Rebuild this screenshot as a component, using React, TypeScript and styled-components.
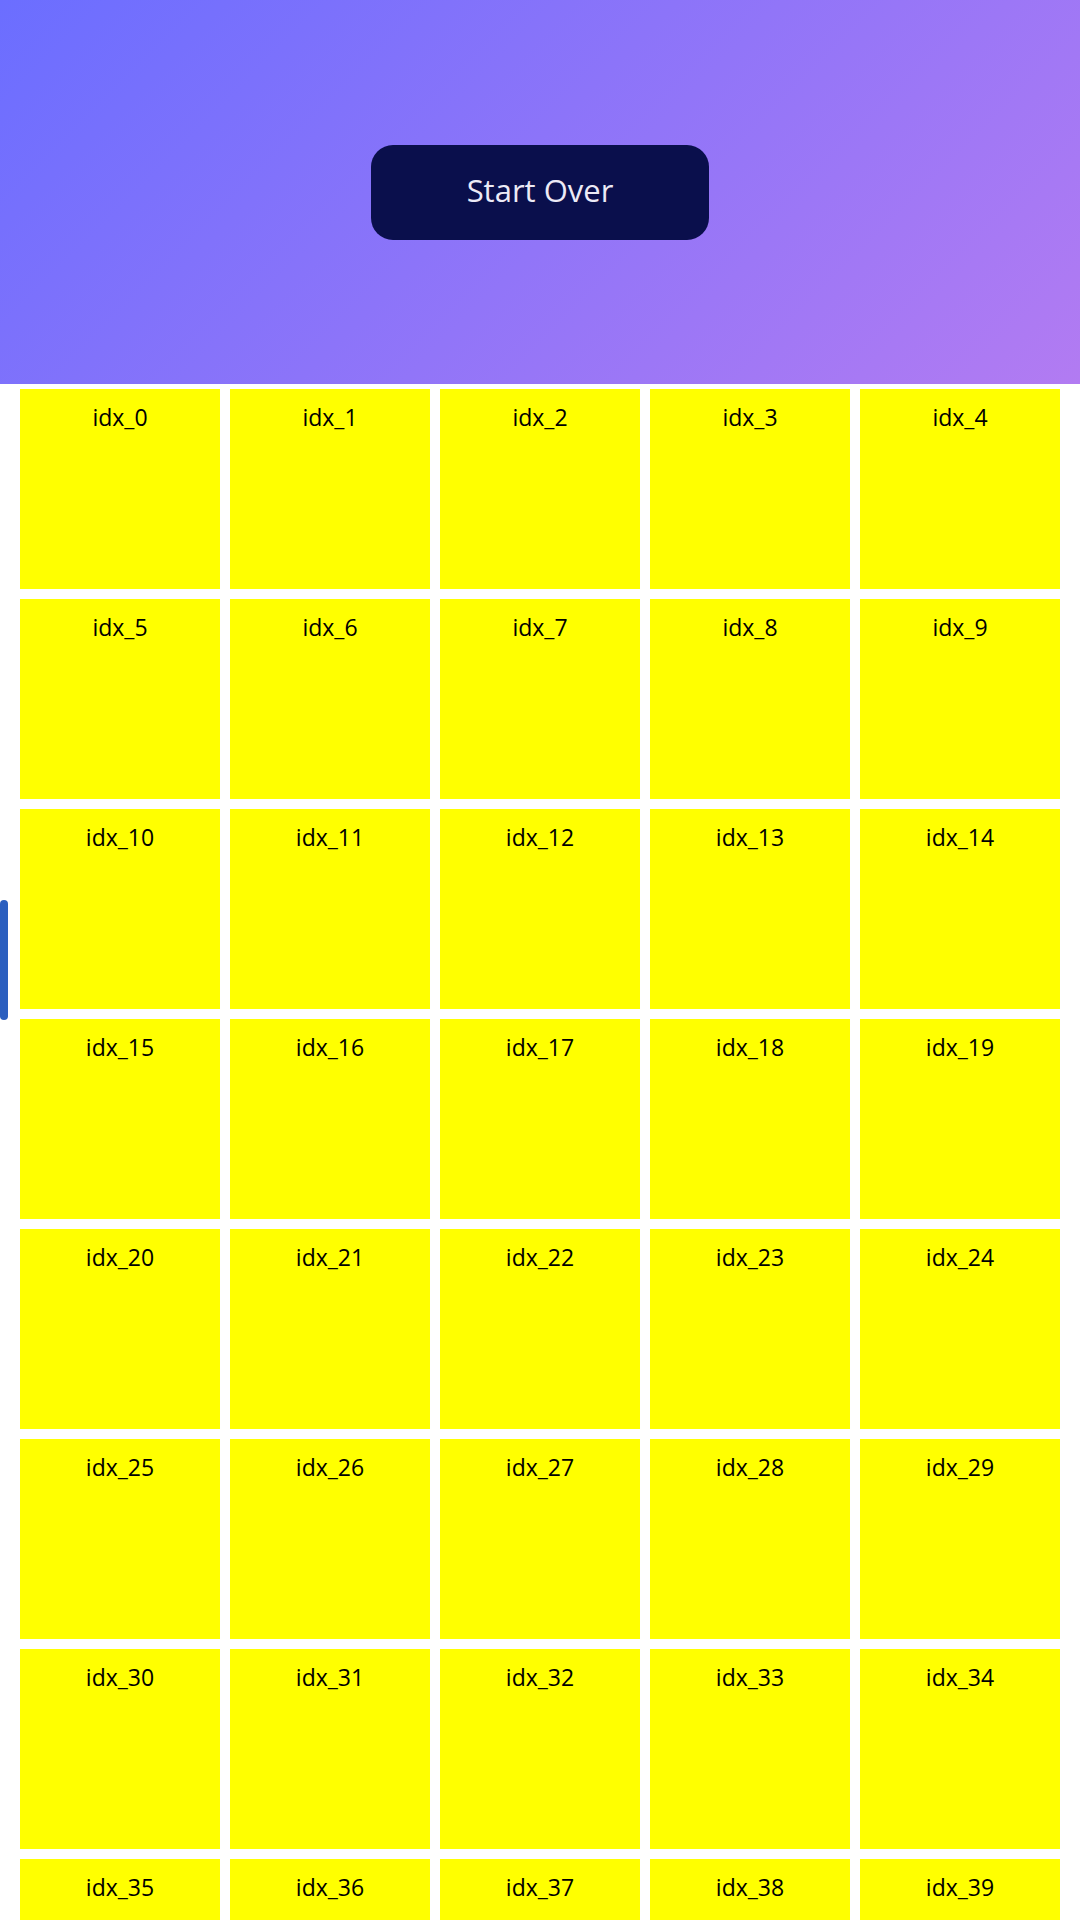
import React from "react";
import styled, { createGlobalStyle } from "styled-components";

const Global = createGlobalStyle`
  html, body { margin: 0; padding: 0; background: #ffffff; }
  body { font-family: "Open Sans", "Noto Sans", sans-serif; }
  * { box-sizing: border-box; }
`;

const Page = styled.div`
  position: relative;
  width: 1080px;
`;

const Header = styled.header`
  height: 384px;
  display: flex;
  align-items: center;
  justify-content: center;
  background: linear-gradient(135deg, #6b6eff 0%, #b27bf2 100%);
`;

const StartButton = styled.button`
  width: 338px;
  height: 95px;
  padding: 0 0 5px 0;
  border: none;
  border-radius: 22px;
  background: #0a0f4c;
  color: #eceaf6;
  font-family: "Open Sans", "Noto Sans", sans-serif;
  font-size: 31px;
  cursor: pointer;
`;

const Grid = styled.div`
  display: grid;
  grid-template-columns: repeat(5, 200px);
  gap: 10px;
  padding: 5px 20px;
`;

const Cell = styled.div`
  height: 200px;
  background: #ffff00;
  color: #000000;
  font-family: "Open Sans", "Noto Sans", sans-serif;
  font-size: 23px;
  line-height: 30px;
  text-align: center;
  padding-top: 13px;
`;

const ScrollThumb = styled.div`
  position: absolute;
  left: 0;
  top: 900px;
  width: 8px;
  height: 120px;
  border-radius: 4px;
  background: #2b5fbf;
`;

export default function App() {
  const items = Array.from({ length: 40 }, (_, i) => `idx_${i}`);
  return (
    <>
      <Global />
      <Page>
        <Header>
          <StartButton>Start Over</StartButton>
        </Header>
        <Grid>
          {items.map((t) => (
            <Cell key={t}>{t}</Cell>
          ))}
        </Grid>
        <ScrollThumb />
      </Page>
    </>
  );
}
